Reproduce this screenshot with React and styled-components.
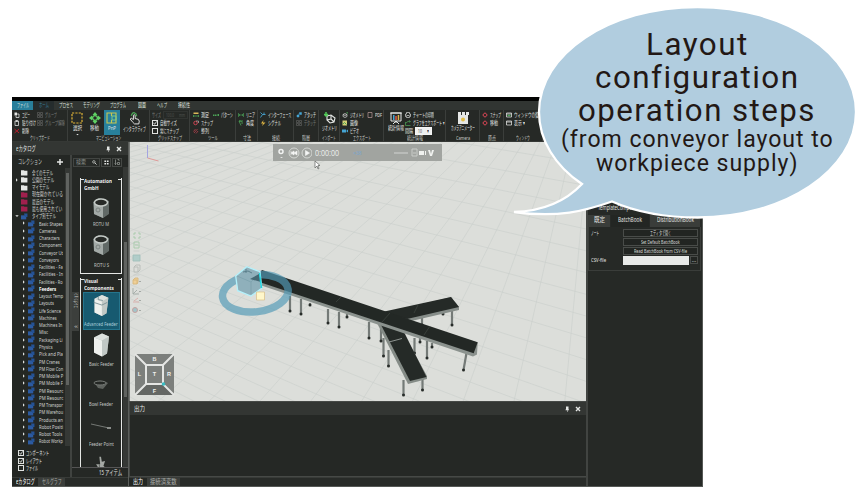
import React, { useLayoutEffect, useRef, useState } from "react";
import styled, { createGlobalStyle } from "styled-components";

const Global = createGlobalStyle`
  * { box-sizing: border-box; }
  html, body { margin: 0; background: #fff; }
  body { width: 864px; height: 487px; overflow: hidden; }
`;
const SANS = '"Noto Sans", "Noto Sans CJK JP", sans-serif';

/* Text condensed to a given width */
const FitBox = styled.span`
  display: block; flex: none; width: ${p => p.$w}px; white-space: nowrap; height: ${p => p.$h || 8}px;
  line-height: ${p => p.$h || 8}px;
`;
const FitInner = styled.span`display: inline-block; transform-origin: 0 50%; line-height: inherit; vertical-align: top;`;
function Fit({ w, h, children }) {
  const ref = useRef(null);
  const [s, setS] = useState(1);
  useLayoutEffect(() => { setS(w / ref.current.offsetWidth); }, [w, children]);
  return <FitBox $w={w} $h={h}><FitInner ref={ref} style={{ transform: `scaleX(${s})` }}>{children}</FitInner></FitBox>;
}

const Page = styled.main`
  position: relative; width: 864px; height: 487px; padding: 97px 0 0 12px; background: #fff; overflow: hidden;
`;
const Window = styled.section`
  width: 691px; height: 390px; display: flex; flex-direction: column; overflow: hidden;
  background: #252825; color: #e2e4e2; font: 6px/8px ${SANS};
  border: solid #555855; border-width: 0 1px 1px 0;
`;
const TitleStrip = styled.div`height: 4px; flex: none; background: #030403;`;
const TabBar = styled.nav`height: 9px; flex: none; display: flex; background: #313532;`;
const MenuTab = styled.div`
  width: ${p => p.$w}px; height: 9px; display: flex; justify-content: center; color: ${p => p.$on ? "#367a95" : "#dfe1df"};
  background: ${p => p.$file ? "#297f9b" : p.$on ? "#252c2d" : "transparent"};
`;
const Ribbon = styled.div`height: 32px; flex: none; display: flex; background: #262926; border-bottom: 1px solid #353835;`;
const Group = styled.div`
  width: ${p => p.$w}px; flex: none; height: 31px; border-right: 1px solid #3b3e3b;
  display: flex; flex-direction: column; overflow: hidden;
`;
const GroupBody = styled.div`height: 25px; display: flex; padding-left: ${p => p.$pad || 2}px;`;
const GroupName = styled.div`height: 6px; display: flex; justify-content: center; line-height: 6px; color: #c9cbc9; font-size: 5.5px;`;
const Stack = styled.div`width: ${p => p.$w}px; flex: none; display: flex; flex-direction: column; padding-top: 1px;`;
const Command = styled.div`height: 8px; display: flex; align-items: center; gap: 2px; opacity: ${p => p.$dim ? 0.4 : 1};`;
const Tool = styled.div`
  width: ${p => p.$w}px; flex: none; height: 25px; padding-top: 2px; display: flex; flex-direction: column; align-items: center; gap: 1px;
  background: ${p => p.$on ? "#28809c" : "transparent"};
`;
const Field = styled.div`
  width: ${p => p.$w}px; height: ${p => p.$h || 8}px; flex: none; padding: 0 2px; display: flex; align-items: center; justify-content: space-between;
  background: ${p => p.$light ? "#eff0ef" : "#272a27"}; color: ${p => p.$light ? "#444" : "#888c88"};
  border: 1px solid ${p => p.$light ? "#f4f4f4" : "#424542"};
`;
const Check = styled.span`
  width: 6px; height: 6px; flex: none; border: 1px solid #e0e2e0; display: flex;
`;
const Svg = styled.svg`display: block; flex: none;`;

function Glyph({ name, s = 6 }) {
  const W = "#e5e7e5", G = "#4ca657", B = "#45a5d4", R = "#c94351";
  const shapes = {
    copy: <><path d="M1 1h5v6H1z" fill={W} /><path d="M5 4h5v7H4V8" stroke={W} fill="none" strokeWidth="1.5" /></>,
    paste: <path d="M2 2h7v9H2zM4 1h3v2H4z" stroke={W} fill="none" strokeWidth="1.5" />,
    del: <path d="M1 2l9 8M10 2l-9 8" stroke="#b71e2b" strokeWidth="2" />,
    grp: <path d="M1 1h4v4H1zM7 7h4v4H7zM7 1h4v4H7zM1 7h4v4H1z" stroke={W} fill="none" />,
    sel: <path d="M1 1h10v10H1z" stroke="#dfb437" strokeWidth="1.2" strokeDasharray="2.2 1.15" fill="none" />,
    move: <><path d="M6 0l2.5 3h-5zM6 12l2.5-3h-5zM0 6l3-2.5v5zM12 6L9 3.500v5z" fill="#5fd164" /><circle cx="6" cy="6" r="2.400" stroke="#5fd164" strokeWidth="1.3" fill="none" /></>,
    pnp: <><path d="M1 1h9v10H1zM5.500 1v3M5.500 8v3" stroke="#c7c650" fill="none" strokeWidth="1.1" /><path d="M6 4h4v4H6z" stroke="#7ecb8a" fill="none" /></>,
    hand: <><path d="M4 9L2 6.500l1-.8L5 7V3q.8-1 1.600 0v3l3 .8Q11 8 10 11H6z" stroke={W} fill="none" strokeWidth=".9" /><path d="M3 3.500Q4 0 6 .8T8 4" stroke={G} fill="none" strokeWidth="1.200" /></>,
    measure: <><path d="M1 1h10v3H1z" fill="#dab858" /><path d="M1 8h10M1 6v4M11 6v4" stroke={G} strokeWidth="1.6" /></>,
    snap: <><circle cx="5" cy="6" r="3.5" stroke={R} strokeWidth="2" fill="none" /><path d="M6 2h5v4" stroke={W} fill="none" /></>,
    origin: <><circle cx="6" cy="6" r="3.500" stroke={R} strokeWidth="1.800" fill="none" /><path d="M6 0v3M6 9v3M0 6h3M9 6h3" stroke={R} /></>,
    align: <path d="M2 10L9 2M6 11l4-5M1 7l4-5" stroke={R} strokeWidth="1.4" />,
    pattern: <path d="M0 5h3v3H0zM4 5h3v3H4zM9 4h3v4H9z" fill={G} />,
    linear: <path d="M1 2v8M11 2v8M1 6h10M4 4L2 6l2 2M8 4l2 2-2 2" stroke={G} fill="none" strokeWidth="1.200" />,
    angle: <path d="M10 2H2l4 9M2 2q8 0 6 6" stroke={G} fill="none" strokeWidth="1.6" />,
    iface: <path d="M1 1l4 4h6M5 5l-4 6M8 1v4" stroke={B} fill="none" strokeWidth="1.8" />,
    bolt: <path d="M7 0L2 7h4l-2 5 7-7H6z" fill="#e0b642" />,
    attach: <path d="M2 6h4v4H2zM7 1h4v4H7zM4 5l3-2" stroke={B} fill={B} />,
    geo: <><path d="M3 4l4-1 4 3-1 4-4 1-3-3zM7 3v4l3 3M7 7L3 8" stroke={W} fill="none" strokeWidth="1.1" /><path d="M2 0v4M0 2l2 2 2-2" stroke="#52cb58" fill="none" strokeWidth="1.5" /></>,
    geos: <><path d="M2 5l4-2 4 2v4l-4 2-4-2zM2 5l4 2 4-2" stroke={W} fill="none" strokeWidth="1.300" /><path d="M8 0h4v4" stroke={G} strokeWidth="1.800" fill="none" /></>,
    image: <><path d="M1 1h9v10H1z" fill="#d5cf74" /><path d="M2 8l3-3 4 4" stroke={G} strokeWidth="2" fill="none" /></>,
    video: <path d="M0 3h8v6H0zM9 5l3-2v6L9 7z" fill={B} />,
    pdf: <path d="M2 1h8v10H2z" stroke="#c6a0a1" fill="none" strokeWidth="1.300" />,
    chart: <><path d="M1 1h10v8H1zM0 1h12M6 9v2M3 12l3-3 3 3" stroke={W} fill="none" /><path d="M3 3h1.500v5H3z" fill={B} /><path d="M5.300 4h1.500v4H5.300z" fill="#de5848" /><path d="M7.700 3h1.500v5H7.700z" fill="#dcb14a" /></>,
    print: <path d="M3 1h6v3h2v5H9v2H3V9H1V4h2zM3 7h6" stroke={W} fill="none" strokeWidth="1.300" />,
    graph: <path d="M1 4v7h10M2 6q4-5 8-3M8 1l3 2-2 2" stroke={G} fill="none" strokeWidth="1.4" />,
    cam: <><path d="M1 3h10v9H1z" fill={W} /><path d="M1 0h3v3H1zM5 0h3v3H5zM9 0h3v3H9z" fill={W} /><circle cx="6" cy="7.500" r="2" fill="#e1bd48" /></>,
    win: <path d="M1 2h10v8H1zM1 4h10" stroke={W} fill="none" strokeWidth="1.5" />,
    restore: <><path d="M1 2h10v8H1zM1 4h10" stroke={W} fill="none" strokeWidth="1.5" /><path d="M3 7h6" stroke={G} strokeWidth="2.500" /></>,
    folder: <path d="M0 2h5l1 1h5v8H0z" fill={W} />,
    redf: <path d="M0 2h5l1 1h5v8H0z" fill="#a0204e" />,
    bluef: <><path d="M0 4h9v7H0z" fill="#2c5aa0" /><path d="M5 1h6v6H7z" fill="#245294" /></>,
    arrow: <path d="M3 1l5 5-5 5z" fill={W} />,
    down: <path d="M1 4h10L6 9z" fill={W} />,
    plus: <path d="M6 0v12M0 6h12" stroke={W} strokeWidth="3" />,
    pin: <path d="M4 1h5v6h1v1.500H7V12H6V8.500H3V7h1z" fill={W} />,
    close: <path d="M2 2l8 8M10 2l-8 8" stroke={W} strokeWidth="2.8" />,
    search: <><circle cx="4.500" cy="4.500" r="3" stroke={W} strokeWidth="1.5" fill="none" /><path d="M7 7l4 4" stroke={W} strokeWidth="2" /></>,
    tiles: <path d="M1 1h4v4H1zM7 1h4v4H7zM1 7h4v4H1zM7 7h4v4H7z" fill={W} />,
    sort: <path d="M3 1v10M1 9l2 2 2-2M7 1h3v3M7 7h4v4H7z" stroke="#a6aaa6" fill="none" strokeWidth="1.300" />,
    check: <path d="M1 5l4 5L11 1" stroke={W} strokeWidth="2.500" fill="none" />,
  };
  return <Svg width={s} height={s} viewBox="0 0 12 12">{shapes[name]}</Svg>;
}
const Cmd = ({ i, w, dim, children }) => <Command $dim={dim}><Glyph name={i} /><Fit w={w}>{children}</Fit></Command>;
const RGroup = ({ w, pad, name, nw, children }) => (
  <Group $w={w}><GroupBody $pad={pad}>{children}</GroupBody><GroupName><Fit w={nw} h={6}>{name}</Fit></GroupName></Group>
);

function Commands() {
  return (
    <Ribbon>
      <RGroup w={56} name="クリップボード" nw={20}>
        <Stack $w={23}><Cmd i="copy" w={8}>コピー</Cmd><Cmd i="paste" w={14}>貼り付け</Cmd><Cmd i="del" w={7}>削除</Cmd></Stack>
        <Stack $w={30}><Cmd dim i="grp" w={12}>グループ</Cmd><Cmd dim i="grp" w={20}>グループ解除</Cmd></Stack>
      </RGroup>
      <RGroup w={82} pad={1} name="マニピュレーション" nw={25}>
        <Tool $w={16}><Glyph name="sel" s={12} /><Fit w={9} h={7}>選択</Fit><Glyph name="down" s={3} /></Tool>
        <Tool $w={19}><Glyph name="move" s={12} /><Fit w={9} h={7}>移動</Fit></Tool>
        <Tool $w={16} $on><Glyph name="pnp" s={12} /><Fit w={8} h={7}>PnP</Fit></Tool>
        <Tool $w={29}><Glyph name="hand" s={13} /><Fit w={23} h={7}>インタラクティブ</Fit></Tool>
      </RGroup>
      <RGroup w={40} name="グリッドスナップ" nw={24}>
        <Stack $w={37}>
          <Command $dim><Fit w={9}>サイズ</Fit><Field $w={25}><Fit w={8}>100.0</Fit><Fit w={6}>mm</Fit></Field></Command>
          <Command><Check><Glyph name="check" s={4} /></Check><Fit w={17}>自動サイズ</Fit></Command>
          <Command><Check /><Fit w={19}>常にスナップ</Fit></Command>
        </Stack>
      </RGroup>
      <RGroup w={46} pad={3} name="ツール" nw={10}>
        <Stack $w={20}><Cmd i="measure" w={8}>測定</Cmd><Cmd i="snap" w={12}>スナップ</Cmd><Cmd i="align" w={8}>整列</Cmd></Stack>
        <Stack $w={21}><Cmd i="pattern" w={12}>パターン</Cmd></Stack>
      </RGroup>
      <RGroup w={22} name="寸法" nw={8}><Stack $w={19}><Cmd i="linear" w={9}>リニア</Cmd><Cmd i="angle" w={8}>角度</Cmd></Stack></RGroup>
      <RGroup w={36} name="接続" nw={8}><Stack $w={33}><Cmd i="iface" w={23}>インターフェース</Cmd><Cmd i="bolt" w={13}>シグナル</Cmd></Stack></RGroup>
      <RGroup w={25} name="階層" nw={8}><Stack $w={22}><Cmd i="attach" w={12}>アタッチ</Cmd><Cmd dim i="grp" w={12}>デタッチ</Cmd></Stack></RGroup>
      <RGroup w={21} name="インポート" nw={14}><Tool $w={17}><Glyph name="geo" s={12} /><Fit w={15} h={7}>ジオメトリ</Fit></Tool></RGroup>
      <RGroup w={44} name="エクスポート" nw={18}>
        <Stack $w={25}><Cmd i="geos" w={14}>ジオメトリ</Cmd><Cmd i="image" w={8}>画像</Cmd><Cmd i="video" w={9}>ビデオ</Cmd></Stack>
        <Stack $w={16}><Cmd i="pdf" w={7}>PDF</Cmd></Stack>
      </RGroup>
      <RGroup w={62} name="統計情報" nw={16}>
        <Tool $w={19}><Glyph name="chart" s={12} /><Fit w={16} h={7}>統計情報</Fit></Tool>
        <Stack $w={40}>
          <Cmd i="print" w={21}>チャートの印刷</Cmd><Cmd i="graph" w={31}>グラフをエクスポート ▾</Cmd>
          <Command><Fit w={8}>間隔</Fit><Field $w={17} $light><Fit w={4}>10</Fit><Fit w={2}>▾</Fit></Field></Command>
        </Stack>
      </RGroup>
      <RGroup w={34} name="Camera" nw={14}><Tool $w={30}><Glyph name="cam" s={12} /><Fit w={24} h={7}>カメラアニメーター</Fit></Tool></RGroup>
      <RGroup w={24} name="原点" nw={8}><Stack $w={20}><Cmd i="origin" w={11}>スナップ</Cmd><Cmd i="origin" w={8}>移動</Cmd></Stack></RGroup>
      <RGroup w={39} name="ウィンドウ" nw={14}><Stack $w={36}><Cmd i="restore" w={28}>ウィンドウの復元</Cmd><Cmd i="win" w={11}>表示 ▾</Cmd></Stack></RGroup>
    </Ribbon>
  );
}

const Workspace = styled.div`flex: 1; min-height: 0; display: flex;`;
const Catalog = styled.aside`width: 117px; flex: none; display: flex; flex-direction: column; border-right: 1px solid #5a5d5a;`;
const PanelHead = styled.header`
  height: 13px; flex: none; display: flex; align-items: center; gap: 5px; padding: 0 ${p => p.$r || 5}px 0 4px; background: #333633; font-size: 7px;
`;
const Spacer = styled.span`flex: 1;`;
const CatalogBody = styled.div`height: 322px; flex: none; display: flex;`;
const TreeCol = styled.div`width: 60px; flex: none; background: #242724; border-right: 2px solid #404340;`;
const TreeHead = styled.div`height: 13px; display: flex; align-items: center; padding: 0 7px 0 6px; font-size: 7px; color: #c5c8c5;`;
const TreeScroll = styled.div`height: 278px; display: flex;`;
const Tree = styled.div`width: 52px; padding-top: 1px; overflow: hidden;`;
const Node = styled.div`
  height: 7.27px; display: flex; align-items: center; gap: 2px; padding-left: ${p => p.$child ? 10 : 3}px;
  font-size: 5.7px; font-weight: ${p => p.$bold ? 700 : 400}; color: ${p => p.$bold ? "#fff" : "#d2d4d2"};
`;
const Twist = styled.span`width: 4px; flex: none; display: flex; justify-content: center;`;
const NodeLabel = styled.span`height: 8px; flex: 1; margin-left: 2px;`;
const Track = styled.div`
  width: 5px; flex: none; background: #353835; padding: ${p => p.$top}px 1px 0; margin-left: auto;
  &::before { content: ""; display: block; height: ${p => p.$len}px; background: #606360; }
`;
const Filters = styled.div`padding: 3px 6px; font-size: 6px;`;
const FilterRow = styled.div`height: 7.700px; display: flex; align-items: center; gap: 2px;`;
const ItemsCol = styled.div`flex: 1; min-width: 0; display: flex; flex-direction: column;`;
const SearchBar = styled.div`height: 12px; flex: none; display: flex; align-items: center; gap: 1px; padding: 2px 1px 0;`;
const IconCell = styled.span`width: 10px; height: 9px; border: 1px solid #454845; display: flex; align-items: center; justify-content: center;`;
const ItemsBody = styled.div`flex: 1; min-height: 0; display: flex; overflow: hidden;`;
const SideTab = styled.div`
  width: 7px; height: 39px; margin-top: 125px; flex: none; background: #3c3f3c; color: #b8bbb8;
  display: flex; flex-direction: column; align-items: center; justify-content: space-between; padding: 1px 0 2px;
`;
const SideText = styled.span`writing-mode: vertical-rl; transform: rotate(180deg); font-size: 5px; line-height: 7px; white-space: nowrap;`;
const Families = styled.div`width: 42px; margin-left: 1px; padding-top: 11px; flex: none;`;
const Family = styled.fieldset`
  margin: 0 0 ${p => p.$gap || 0}px; padding: 0 2px; min-width: 0; border: solid #e5e7e5; border-width: 0 1.500px 1.500px;
  height: ${p => p.$h}px; display: flex; flex-direction: column; align-items: center; position: relative;
  &::before, &::after { content: ""; position: absolute; top: 1px; width: 3px; height: 1px; background: #e5e7e5; }
  &::before { left: 0; } &::after { right: 0; }
`;
const FamilyName = styled.div`align-self: flex-start; height: ${p => p.$h || 15}px; font-size: 6px; line-height: 7px; font-weight: 700; margin-left: 1px; color: #eee;`;
const Item = styled.div`
  width: 37px; height: ${p => p.$h || 40}px; flex: none; display: flex; flex-direction: column; align-items: center; justify-content: space-between;
  padding: 2px 0 1px; font-size: 5.500px; color: ${p => p.$on ? "#a9ced9" : "#c3c6c3"};
  background: ${p => p.$on ? "#175a70" : "transparent"}; border: 1px solid ${p => p.$on ? "#25758d" : "transparent"};
`;
const Status = styled.div`height: 10px; flex: none; display: flex; justify-content: flex-end; padding: 1px 6px 0 0; border-top: 1px solid #555; font-size: 7px;`;
const BottomTabs = styled.div`flex: 1; display: flex; padding-left: ${p => p.$pad || 0}px; border-top: 1px solid #383b38; background: #282b28;`;
const BottomTab = styled.div`
  width: ${p => p.$w}px; display: flex; justify-content: center; font-size: 6.500px;
  color: ${p => p.$on ? "#fff" : "#aaada9"}; background: ${p => p.$on ? "#242724" : "#3b3e3b"};
`;

const roots = [
  ["folder", "全てのモデル", 21], ["folder", "公開のモデル", 22, "arrow"], ["folder", "マイモデル", 17],
  ["redf", "現在開かれている", 31], ["redf", "最近のモデル", 22], ["redf", "最も使用されてい", 30], ["bluef", "タイプ別モデル", 24, "down"],
];
const kids = [
  ["Basic Shapes", 24], ["Cameras", 17], ["Characters", 21], ["Component", 23], ["Conveyor Ut", 24], ["Conveyors", 20],
  ["Facilities - Fa", 24], ["Facilities - In", 24], ["Facilities - Ro", 24], ["Feeders", 17], ["Layout Temp", 24],
  ["Layouts", 15], ["Life Science", 22], ["Machines", 18], ["Machines In", 23], ["Misc", 9], ["Packaging Li", 24], ["Physics", 14],
  ["Pick and Pla", 24], ["PM Cranes", 21], ["PM Flow Con", 24], ["PM Mobile P", 24], ["PM Mobile F", 24],
  ["PM Resourc", 24], ["PM Resourc", 24], ["PM Transpor", 24], ["PM Warehou", 24], ["Products an", 24], ["Robot Positi", 24],
  ["Robot Tools", 23], ["Robot Workp", 24],
];

function Thumb({ kind }) {
  if (kind === "rotu") return <Svg width="20" height="24" viewBox="0 0 20 24"><path d="M2 6l6-4 10 3v12l-6 5-9-4z" fill="#6e7774" /><path d="M3 7l9 3v12l-9-4z" fill="#a3aaa7" /><path d="M12 10l6-4v12l-6 4z" fill="#616966" /><ellipse cx="10" cy="6.500" rx="6.500" ry="3.500" fill="#272a27" stroke="#c4cac6" strokeWidth="1.500" /><circle cx="7" cy="14" r="2" stroke="#7b8380" fill="none" /></Svg>;
  if (kind === "bowl") return <Svg width="18" height="15" viewBox="0 0 18 15"><path d="M2 3q8-3 14 1l-5 6-5-1z" fill="#5e625e" /><ellipse cx="8" cy="4" rx="6" ry="2" fill="#242724" stroke="#777b77" /></Svg>;
  if (kind === "point") return <Svg width="22" height="11" viewBox="0 0 22 11"><path d="M1 3l18 4" stroke="#747874" strokeWidth="1" /><path d="M17 6h4v2h-4z" fill="#8a8d8a" /></Svg>;
  if (kind === "tool") return <Svg width="18" height="18" viewBox="0 0 18 22"><path d="M7 1l2 0 1 6 4-1-2 6 4 4-5 4-8-2 2-5-2-3 5 0z" fill="#a4a8a4" /><path d="M7 10v8l5 2" stroke="#545854" fill="none" /></Svg>;
  return <Svg width="20" height={kind === "adv" ? 22 : 25} viewBox="0 0 20 24"><path d="M3 4l8-4 7 3-2 17-5 3-8-4z" fill="#b8bebb" /><path d="M3 4l8 3v16l-8-4z" fill="#eef0ed" /><path d="M11 7l7-4-2 17-5 3z" fill="#c1c8c5" /><path d="M3 4l8-4 7 3-7 4z" fill="#dde2df" />{kind === "adv" && <path d="M2 8l9 3 6-3M7 2v3l5 1" stroke="#7d9296" fill="none" />}</Svg>;
}

function CatalogPanel() {
  return (
    <Catalog>
      <PanelHead $r={6}><Fit w={20}>eカタログ</Fit><Spacer /><Glyph name="pin" /><Glyph name="close" /></PanelHead>
      <CatalogBody>
        <TreeCol>
          <TreeHead><Fit w={24}>コレクション</Fit><Spacer /><Glyph name="plus" /></TreeHead>
          <TreeScroll>
            <Tree>
              {roots.map(([icon, t, w, tw]) => <Node key={t}><Twist>{tw && <Glyph name={tw} s={4} />}</Twist><Glyph name={icon} s={7} /><NodeLabel><Fit w={w}>{t}</Fit></NodeLabel></Node>)}
              {kids.map(([t, w], n) => <Node key={n} $child $bold={t === "Feeders"}><Twist><Glyph name="arrow" s={4} /></Twist><Glyph name="bluef" s={7} /><NodeLabel><Fit w={w}>{t}</Fit></NodeLabel></Node>)}
            </Tree>
            <Track $top={5} $len={212} />
          </TreeScroll>
          <Filters>
            <FilterRow><Check><Glyph name="check" s={4} /></Check><Fit w={23}>コンポーネント</Fit></FilterRow>
            <FilterRow><Check><Glyph name="check" s={4} /></Check><Fit w={16}>レイアウト</Fit></FilterRow>
            <FilterRow><Check /><Fit w={12}>ファイル</Fit></FilterRow>
          </Filters>
        </TreeCol>
        <ItemsCol>
          <SearchBar><Field $w={27} $h={9}><Fit w={10}>検索</Fit><Glyph name="search" s={5} /></Field><IconCell><Glyph name="tiles" s={5} /></IconCell><IconCell><Glyph name="sort" s={6} /></IconCell></SearchBar>
          <ItemsBody>
            <SideTab><SideText>ｺﾚｸｼｮﾝ</SideText><Fit w={4} h={6}>«</Fit></SideTab>
            <Families>
              <Family $h={96} $gap={4}><FamilyName><Fit w={28} h={7}>Automation</Fit><Fit w={15} h={7}>GmbH</Fit></FamilyName>
                <Item $h={37}><Thumb kind="rotu" /><Fit w={16}>ROTU M</Fit></Item><Item $h={41}><Thumb kind="rotu" /><Fit w={15}>ROTU S</Fit></Item></Family>
              <Family $h={230}><FamilyName $h={14}><Fit w={14} h={7}>Visual</Fit><Fit w={30} h={7}>Components</Fit></FamilyName>
                <Item $h={38} $on><Thumb kind="adv" /><Fit w={34}>Advanced Feeder</Fit></Item>
                <Item $h={40}><Thumb kind="basic" /><Fit w={25}>Basic Feeder</Fit></Item>
                <Item $h={40}><Spacer /><Thumb kind="bowl" /><Spacer /><Fit w={24}>Bowl Feeder</Fit></Item>
                <Item $h={40}><Spacer /><Thumb kind="point" /><Spacer /><Fit w={25}>Feeder Point</Fit></Item>
                <Item $h={26}><Spacer /><Thumb kind="tool" /></Item></Family>
            </Families>
            <Track $top={75} $len={155} />
          </ItemsBody>
          <Status><Fit w={23}>15 アイテム</Fit></Status>
        </ItemsCol>
      </CatalogBody>
      <BottomTabs><BottomTab $w={26} $on><Fit w={19}>eカタログ</Fit></BottomTab><BottomTab $w={27}><Fit w={20}>セルグラフ</Fit></BottomTab></BottomTabs>
    </Catalog>
  );
}

const Center = styled.div`width: 459px; flex: none; display: flex; flex-direction: column; border-right: 2px solid #414441;`;
const Viewport = styled.div`height: 259px; flex: none; position: relative; overflow: hidden; background: #dcdeda; border-left: 1px solid #747774;`;
const SceneSvg = styled.svg`display: block; width: 456px; height: 259px;`;
const Playback = styled.div`
  position: absolute; top: 2px; left: 143px; width: 169px; height: 17px; background: #a1a4a0; display: flex; align-items: center; padding: 0 5px; gap: 3px;
  color: #e9ebe9; font: 9px/14px "Liberation Sans", sans-serif;
`;
const Output = styled.div`height: 76px; flex: none; border: 1px solid #464946; border-right: 0;`;

const legs = [[290, 296, 15], [301, 299, 15], [310, 303, 2], [328, 309, 14], [339, 312, 15], [347, 314, 3], [369, 322, 16], [381, 326, 15], [383.5, 338, 18], [388.5, 350, 16], [403.5, 380, 15], [422.500, 377, 13], [414.500, 338, 15], [427, 341, 17], [420, 338, 4], [432, 343, 4], [465, 353, 17], [422, 317, 8], [443, 311, 3], [452, 310, 15]];

function Scene() {
  const gridA = Array.from({ length: 27 }, (_, n) => {
    const y = 40 + n * 22;
    return <line key={n} x1="-700" y1="-50" x2="600" y2={y + 60} />;
  });
  const gridB = Array.from({ length: 33 }, (_, n) => <line key={n} x1="600" y1="20" x2={-1100 + n * 52} y2="410" />);
  return (
    <SceneSvg viewBox="130 142 456 259">
      <g stroke="#c9cfcb" strokeWidth=".6">{gridA}{gridB}</g>
      <path d="M147.500 145v13" stroke="#a3a4e1" /><path d="M147.500 158l11 3" stroke="#df9a98" />
      <g stroke="#747a77" strokeWidth="2.200">{legs.map(([x, y, h], n) => <line key={n} x1={x + (n === 16 ? 1.500 : 0)} y1={y} x2={x - (n === 16 ? 1.500 : 0)} y2={y + h} />)}</g>
      <g fill="#272c29">{legs.map(([x, y, h], n) => <circle key={n} cx={x - (n === 16 ? 1.500 : 0)} cy={y + h} r="1.500" />)}</g>
      <path d="M384 314l67-17 8 10v3l-52 12z" fill="#868d89" /><path d="M382 312l69-15 8 10-52 12z" fill="#252a27" />
      <path d="M377 323l31 61 19-5v-3l-27-49z" fill="#858c87" /><path d="M379 321l31 60 16.500-4-25-50z" fill="#252a27" /><path d="M389 342l13-3.500" stroke="#8d938f" strokeWidth="1" />
      <path d="M254 279v4l219 73.500 4-2 .7-12z" fill="#8b928e" /><path d="M262 270l215.700 72.300-4 11L253 280z" fill="#232825" />
      <path d="M341 297l-5 5M390 313l-8 9M430 326l-6 9M418 305l-4 8" stroke="#414742" strokeWidth=".7" />
      <ellipse cx="255.300" cy="293.300" rx="33" ry="18.500" transform="rotate(-7 255 293)" fill="none" stroke="#539bb7" strokeOpacity=".68" strokeWidth="7.500" />
      <path d="M235.700 276l11-9.300 13.300 5 1.700 16.600-10.700 7.700-13.300-5.300z" fill="#8fb0bb" stroke="#b4f1fb" strokeWidth="1.300" />
      <path d="M237 276l14 6 9-9M251 282v12" stroke="#7a9faa" strokeWidth=".7" fill="none" /><path d="M243 272l5-1 4 2M246 269v4" stroke="#5b808c" fill="none" />
      <path d="M250 279l9-5 2 8z" fill="#456873" />
      <path d="M259.500 273l2 15" stroke="#22d6df" strokeWidth="1.500" /><path d="M256.500 292h8v8h-8z" fill="#fff7ca" stroke="#d8bf88" strokeWidth=".7" />
      <g fill="none" stroke="#a5c9a9" strokeWidth=".9">
        <path d="M134 235v-2h2M138 233h2v2M140 236v2h-2M136 238h-2v-2M134 242h5v6h-5zM135 245h3" />
        <path d="M133 255h7v6h-7z" fill="#b0cdc9" stroke="#a0bfba" /><path d="M134 267h4v5h-4zM134 267l2-2h4v5l-2 2" stroke="#b6bab6" />
        <path d="M133 280h4v4h-4zM133 280l2-2h3v4l-1 2" fill="#efd097" stroke="#d8b77c" />
        <path d="M133 288v6h6M133 294l4-4" stroke="#a2aaa6" /><path d="M133 302h6M134 301l4-3" stroke="#d8aba8" />
        <circle cx="135" cy="310" r="2.500" fill="#a3c5ca" stroke="#c69d9b" /><path d="M139 281l1 1 1-1M139 291l1 1 1-1M139 300l1 1 1-1M139 310l1 1 1-1" stroke="#9da39f" />
      </g>
      <path d="M133.500 251h6M133.500 275h6" stroke="#c1c5c1" strokeWidth=".6" />
      <path d="M135 354h39v41h-39z" fill="#7c7f7c" />
      <path d="M135 395l11-12h18l10 12z" fill="#646764" />
      <path d="M135 354l11 11M174 354l-11 11M135 395l11-11M174 395l-11-11" stroke="#e5e6e4" strokeWidth="2" /><path d="M146 365h17v19h-17z" fill="#7c7f7c" stroke="#e5e6e4" strokeWidth="2" />
      <circle cx="163.500" cy="384" r="1.800" fill="#39bcc2" />
      <g fill="#f2f3f1" fontFamily="Liberation Sans" fontSize="5.500" fontWeight="700" textAnchor="middle"><text x="154.500" y="361">B</text><text x="139.500" y="376">L</text><text x="154.500" y="376">T</text><text x="169" y="376">R</text><text x="154.500" y="392.500">F</text></g>
    </SceneSvg>
  );
}
const PlayIcons = styled.svg`display: block; flex: none; width: 34px; height: 17px;`;
const Speed = styled.span`margin-left: 11px; font-size: 5px; color: #7ba5cc;`;
const Cursor = styled.svg`position: absolute; left: 184px; top: 19px; width: 6px; height: 9px;`;

function MainView() {
  return (
    <Center>
      <Viewport>
        <Scene />
        <Playback>
          <PlayIcons viewBox="0 0 34 17"><circle cx="3" cy="7.500" r="2" fill="none" stroke="#f2f3f2" strokeWidth="1.500" /><path d="M2 13h3l-1.500 1z" fill="#eee" /><g fill="none" stroke="#d4d7d3"><circle cx="16" cy="9" r="5" /><circle cx="29" cy="9" r="5" /></g><path d="M13 7v4M16 7l-3 2 3 2zM19 7l-3 2 3 2zM27.500 6.500l4 2.500-4 2.500z" fill="#f5f6f5" stroke="#f5f6f5" strokeWidth=".6" /></PlayIcons>
          <Fit w={24} h={14}>0:00:00</Fit><Speed>×38</Speed>
          <Spacer />
          <Svg width="46" height="13" viewBox="0 0 46 13"><path d="M3 7h14" stroke="#dfe1df" strokeWidth=".8" /><path d="M21 3h5v7h-5zM22 7h3" stroke="#c9ccc8" fill="none" /><path d="M28 5h5v4h-5zM34 5h1v4h-1zM37 4h2l1 4 1-4h2l-2 6h-2z" fill="#f0f2ef" /></Svg>
        </Playback>
        <Cursor viewBox="0 0 6 9"><path d="M1 0v7l2-2 1 3 1-.5-1-3h2z" fill="#fff" stroke="#606360" strokeWidth=".7" /></Cursor>
      </Viewport>
      <Output><PanelHead $r={5}><Fit w={11}>出力</Fit><Spacer /><Glyph name="pin" /><Glyph name="close" /></PanelHead></Output>
      <BottomTabs><BottomTab $w={18} $on><Fit w={10}>出力</Fit></BottomTab><BottomTab $w={33}><Fit w={27}>接続済変数</Fit></BottomTab></BottomTabs>
    </Center>
  );
}

const Properties = styled.aside`flex: 1; padding: 62px 1px 0 0; background: #262926;`;
const PropTitle = styled.div`height: 11px; padding: 0 0 0 10px; font-size: 6.500px;`;
const PropTabs = styled.div`height: 12px; display: flex; gap: 1px; background: #272a27;`;
const PropTab = styled.div`width: ${p => p.$w}px; padding-top: 1px; display: flex; justify-content: center; font-size: 6.500px; background: ${p => p.$on ? "#232623" : "#3a3d3a"};`;
const PropForm = styled.div`height: 44px; border: 1px solid #3a3d3a; border-top: 0; padding: 2px 2px 0 2px; display: flex; flex-direction: column; gap: 1px;`;
const PropRow = styled.div`height: 8px; display: flex; justify-content: space-between; align-items: center;`;
const PropButton = styled.button`
  width: ${p => p.$w || 75}px; height: 8px; padding: 0; display: flex; justify-content: center; align-items: center; color: #d8dad8; background: #222522; border: 1px solid #494c49; font: 5.500px/6px ${SANS};
`;
const PropInput = styled.div`width: 66px; height: 9px; margin: 0 1px 0 auto; background: #e8eae8;`;
function PropertyPanel() {
  return (
    <Properties>
      <PropTitle><Fit w={43}>TemplateComponent</Fit></PropTitle>
      <PropTabs><PropTab $w={22}><Fit w={11}>既定</Fit></PropTab><PropTab $w={38} $on><Fit w={24}>BatchBook</Fit></PropTab><PropTab $w={50}><Fit w={37}>DistributionBook</Fit></PropTab></PropTabs>
      <PropForm>
        <PropRow><Fit w={8}>ノート</Fit><PropButton><Fit w={21} h={6}>エディタで開く</Fit></PropButton></PropRow>
        <PropRow><span /><PropButton><Fit w={39} h={6}>Set Default BatchBook</Fit></PropButton></PropRow>
        <PropRow><span /><PropButton><Fit w={53} h={6}>Read BatchBook from CSV-file</Fit></PropButton></PropRow>
        <PropRow><Fit w={15}>CSV-file</Fit><PropInput /><PropButton $w={8}>...</PropButton></PropRow>
      </PropForm>
    </Properties>
  );
}

const Callout = styled.div`position: absolute; left: 510px; top: 0; width: 354px; height: 222px;`;
const CalloutShape = styled.svg`position: absolute; inset: 0; width: 354px; height: 222px;`;
const CalloutText = styled.div`
  position: relative; width: 360px; padding: 28px 0 0 14px; display: flex; flex-direction: column; align-items: center;
  font-family: Roboto, sans-serif; font-size: 32px; letter-spacing: 1.500px; color: #231815;
`;
const Small = styled.div`display: flex; flex-direction: column; align-items: center; font-size: 24px; letter-spacing: 1px;`;

export default function App() {
  const menus = [["ファイル", 21, 12], ["ホーム", 21, 10], ["プロセス", 24, 14], ["モデリング", 26, 17], ["プログラム", 28, 16], ["図面", 19, 8], ["ヘルプ", 22, 10], ["接続性", 22, 12]];
  return (
    <><Global />
      <Page>
        <Window>
          <TitleStrip />
          <TabBar>{menus.map(([t, w, tw], i) => <MenuTab key={t} $w={w} $file={i === 0} $on={i === 1}><Fit w={tw}>{t}</Fit></MenuTab>)}</TabBar>
          <Commands />
          <Workspace><CatalogPanel /><MainView /><PropertyPanel /></Workspace>
        </Window>
        <Callout>
          <CalloutShape viewBox="510 0 354 222">
            <path d="M582 184C555 166 539 140 539 112C539 54 609 7 697.500 7S856 54 856 112S785 217.500 697.500 217.500C665 217.500 636 212 612 201.500C585 211 558 218 514 212C545 211 566 201 582 184Z" fill="#b1cddf" stroke="#fff" strokeWidth="2.300" />
          </CalloutShape>
          <CalloutText>
            <Fit w={103} h={33}>Layout</Fit><Fit w={204} h={33}>configuration</Fit><Fit w={238} h={33}>operation steps</Fit>
            <Small><Fit w={273} h={24}>(from conveyor layout to</Fit><Fit w={202} h={24}>workpiece supply)</Fit></Small>
          </CalloutText>
        </Callout>
      </Page>
    </>
  );
}
